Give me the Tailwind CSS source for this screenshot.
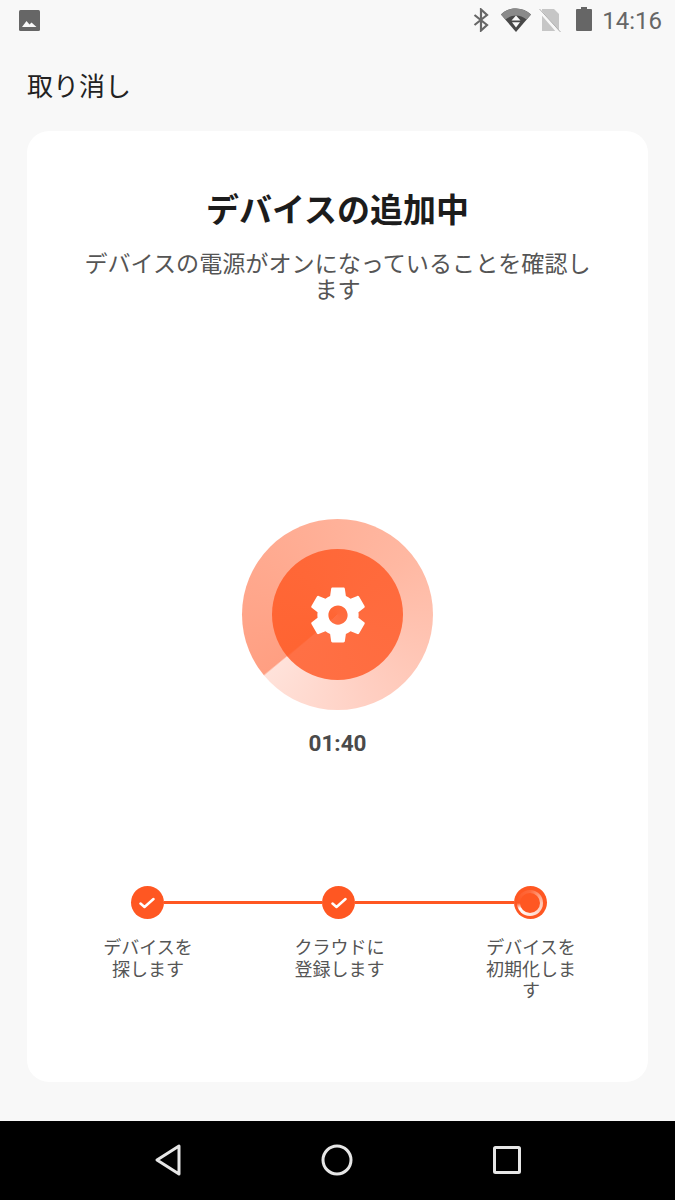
<!DOCTYPE html>
<html lang="ja">
<head>
  <meta charset="UTF-8" />
  <meta name="viewport" content="width=device-width,initial-scale=1" />
  <title>デバイスの追加中</title>
  <script src="https://cdn.jsdelivr.net/npm/@tailwindcss/browser@4"></script>
</head>
<body class="w-[675px] h-[1200px] overflow-hidden flex flex-col bg-[#f8f8f8] font-['Roboto','Noto_Sans_CJK_JP',sans-serif]">
  <!-- status bar -->
  <div class="h-[40px] flex items-center pl-[19px] pr-[13px] text-[#666666]">
    <svg class="w-[21px] h-[21px]" viewBox="0 0 21 21"><rect width="21" height="21" rx="1.500" fill="#666666"/><path d="M3 17l4.500-6 3 3.500 2-2 5 4.500z" fill="#f8f8f8"/></svg>
    <div class="ml-auto flex items-center">
      <svg class="w-[16px] h-[24px]" viewBox="0 0 16 24" fill="none" stroke="#666666" stroke-width="2.200"><path d="M1.500 7l12.500 10L8 22.500V1.500L14 7 1.500 17"/></svg>
      <svg class="w-[30px] h-[24px] ml-[12px]" viewBox="0 0 30 24"><path d="M0 6.500C8-1.500 22-1.500 30 6.500L15 24z" fill="#484848"/><path d="M0 6.500C8-1.500 22-1.500 30 6.500L25.500 11.500C19 6 11 6 4.500 11.500z" fill="#8a8a8a"/><path d="M15 7.500l4.500 5h-9zM15 19.500l-4-5.200h8z" fill="#f8f8f8"/></svg>
      <svg class="w-[22px] h-[24px] ml-[8px]" viewBox="0 0 22 24"><path d="M3 1h12l5 5v17H3z" fill="#c6c6c6"/><path d="M0 2l20 23" stroke="#f8f8f8" stroke-width="3"/><path d="M0.500 1l21 23" stroke="#b0b0b0" stroke-width="1"/></svg>
      <svg class="w-[16px] h-[24px] ml-[15px] -mt-[3px]" viewBox="0 0 16 24"><path d="M5 0h6v2h4a1 1 0 0 1 1 1v20a1 1 0 0 1-1 1H1a1 1 0 0 1-1-1V3a1 1 0 0 1 1-1h4z" fill="#666666"/></svg>
      <span class="ml-[10px] mt-[1px] text-[24px] leading-none">14:16</span>
    </div>
  </div>

  <!-- header -->
  <div class="h-[91px] pl-[27px] pt-[31px] text-[26px] leading-[32px] text-[#222222]">取り消し</div>

  <!-- card -->
  <main class="mx-[27px] h-[951px] bg-white rounded-[22px] flex flex-col items-center">
    <h1 class="mt-[57px] text-[33px] leading-[46px] font-bold text-[#1c1c1c]">デバイスの追加中</h1>
    <p class="mt-[18px] w-[512px] text-center text-[23.100px] leading-[26px] text-[#555555]">デバイスの電源がオンになっていることを確認します</p>

    <div class="mt-[215px] w-[191px] h-[191px] rounded-full bg-[conic-gradient(from_231deg,#ff9f82,#ffb8a2_50%,#ffcfc2_80%,#ffe2da_99.7%,#ff9f82)] flex items-center justify-center">
      <div class="w-[131px] h-[131px] rounded-full bg-[conic-gradient(from_231deg,#ff6432,#ff6a3c_50%,#ff7045_99.5%,#ff6432)] flex items-center justify-center">
        <svg class="w-[66px] h-[66px]" viewBox="0 0 24 24" fill="#ffffff"><path d="M19.430 12.980c.040-.320.070-.640.070-.980s-.030-.660-.070-.980l2.110-1.650c.190-.150.240-.420.120-.640l-2-3.460c-.120-.220-.390-.300-.610-.220l-2.490 1c-.520-.400-1.080-.730-1.690-.980l-.380-2.650C14.460 2.180 14.250 2 14 2h-4c-.250 0-.460.180-.490.420l-.380 2.650c-.610.250-1.170.590-1.690.980l-2.490-1c-.230-.090-.490 0-.610.220l-2 3.460c-.130.220-.070.490.120.640l2.110 1.650c-.040.320-.070.650-.070.980s.030.660.070.980l-2.110 1.650c-.190.150-.240.420-.120.640l2 3.460c.120.220.390.300.610.220l2.490-1c.520.400 1.080.730 1.690.980l.380 2.650c.030.240.240.420.490.420h4c.250 0 .460-.180.490-.420l.380-2.650c.610-.250 1.170-.590 1.690-.980l2.490 1c.230.090.490 0 .610-.220l2-3.460c.120-.220.070-.490-.120-.640l-2.110-1.650zM12 15.500c-1.930 0-3.500-1.570-3.500-3.500s1.570-3.500 3.500-3.500 3.500 1.570 3.500 3.500-1.570 3.500-3.500 3.500z"/></svg>
      </div>
    </div>
    <div class="mt-[19px] text-[22.500px] leading-[28px] font-bold text-[#4a4a4a]">01:40</div>

    <!-- steps -->
    <div class="mt-[129px] ml-[2px] w-[416px] flex items-center">
      <div class="w-[33px] h-[33px] shrink-0 rounded-full bg-[#ff5722] flex items-center justify-center">
        <svg class="w-[16px] h-[12px]" viewBox="0 0 16 12" fill="none" stroke="#ffffff" stroke-width="2.500" stroke-linecap="round" stroke-linejoin="round"><path d="M1.500 6.500l4 3.500 9-8"/></svg>
      </div>
      <div class="flex-1 h-[3px] bg-[#ff5722]"></div>
      <div class="w-[33px] h-[33px] shrink-0 rounded-full bg-[#ff5722] flex items-center justify-center">
        <svg class="w-[16px] h-[12px]" viewBox="0 0 16 12" fill="none" stroke="#ffffff" stroke-width="2.500" stroke-linecap="round" stroke-linejoin="round"><path d="M1.500 6.500l4 3.500 9-8"/></svg>
      </div>
      <div class="flex-1 h-[3px] bg-[#ff5722]"></div>
      <div class="w-[33px] h-[33px] shrink-0 rounded-full bg-[#ff5722] flex items-center justify-center">
        <div class="w-[26px] h-[26px] rounded-full bg-[conic-gradient(from_270deg,#ff5722,#ff6a3c_25%,#ffc4b0_50%,#ffffff_92%,#ff5722)] flex items-center justify-center">
          <div class="w-[20px] h-[20px] rounded-full bg-[#ff5722]"></div>
        </div>
      </div>
    </div>
    <div class="mt-[18px] ml-[4px] w-[416px] flex justify-between text-[18px] leading-[21.500px] text-[#555555] text-center">
      <div class="w-[91px] -ml-[29px]">デバイスを探します</div>
      <div class="w-[91px]">クラウドに登録します</div>
      <div class="w-[91px] -mr-[29px]">デバイスを初期化します</div>
    </div>
  </main>

  <!-- navigation bar -->
  <nav class="mt-auto h-[79px] bg-black flex items-center justify-center gap-[140px] pb-[1px]">
    <svg class="w-[26px] h-[32px]" viewBox="0 0 26 32" fill="none" stroke="#e6e6e6" stroke-width="3" stroke-linejoin="round"><path d="M24 2v28L2 16z"/></svg>
    <svg class="w-[32px] h-[32px]" viewBox="0 0 32 32" fill="none" stroke="#e6e6e6" stroke-width="3"><circle cx="16" cy="16" r="14"/></svg>
    <svg class="w-[28px] h-[28px]" viewBox="0 0 28 28" fill="none" stroke="#e6e6e6" stroke-width="3" stroke-linejoin="round"><rect x="1.500" y="1.500" width="25" height="25" rx="1"/></svg>
  </nav>
</body>
</html>
